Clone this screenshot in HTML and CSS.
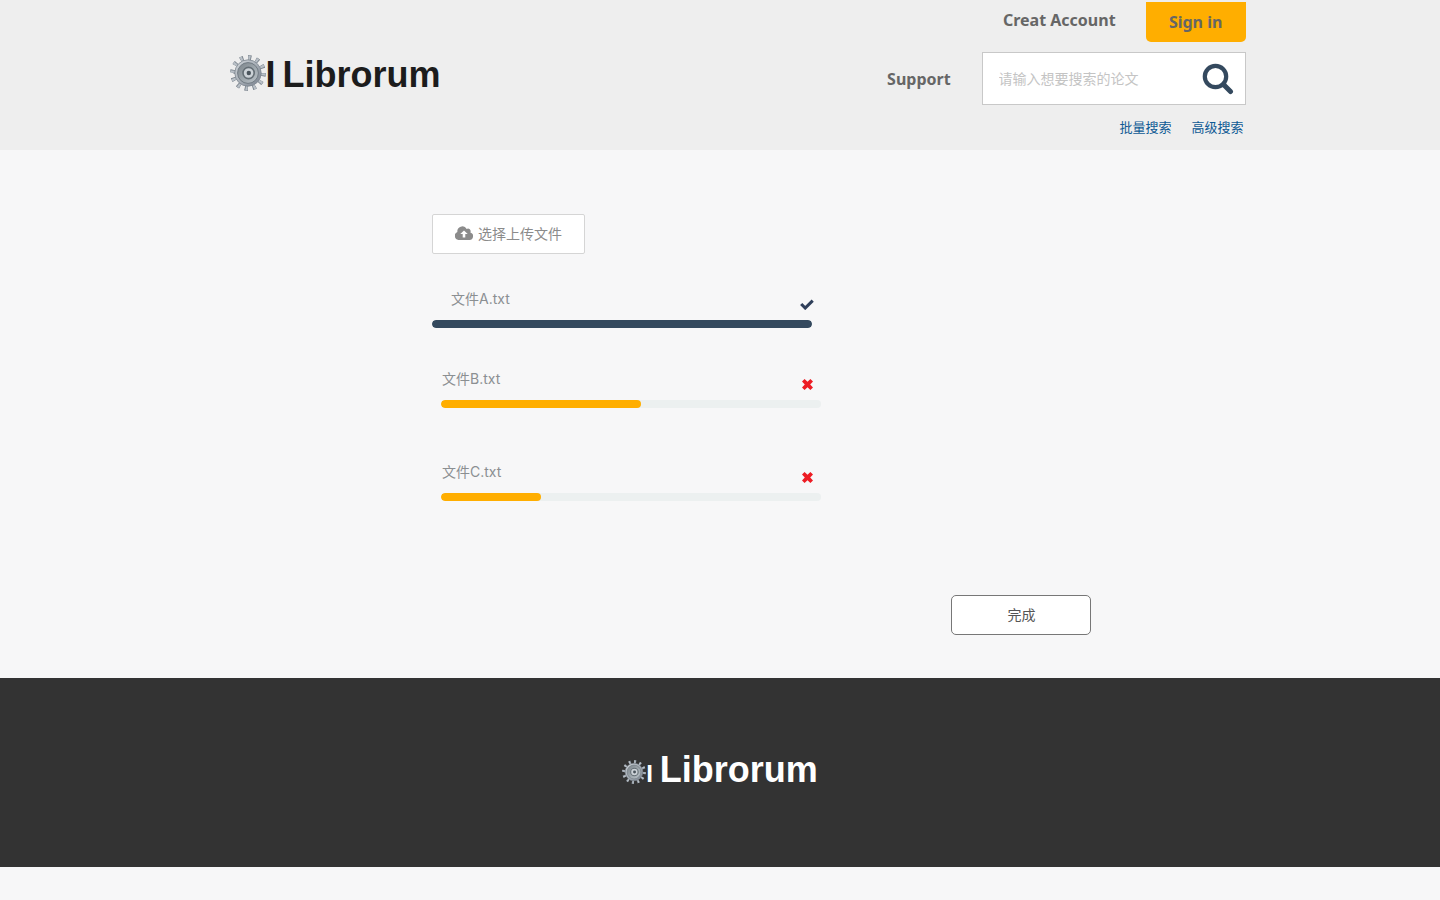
FILE: index.html
```
<!DOCTYPE html>
<html lang="zh-CN">
<head>
<meta charset="utf-8">
<title>Librorum</title>
<meta name="viewport" content="width=device-width, initial-scale=1">
<link rel="stylesheet" href="styles.css">
</head>
<body>
<svg class="sprite" aria-hidden="true">
  <defs>
    <linearGradient id="metal" x1="0" y1="0" x2="1" y2="1">
      <stop offset="0" stop-color="#d5dade"/>
      <stop offset=".5" stop-color="#a7aeb6"/>
      <stop offset="1" stop-color="#777f8c"/>
    </linearGradient>
    <linearGradient id="face" x1="0" y1="0" x2="1" y2="1">
      <stop offset="0" stop-color="#7b848a"/>
      <stop offset="1" stop-color="#bcc4ca"/>
    </linearGradient>
  </defs>
  <symbol id="gear" viewBox="0 0 36 36">
    <circle cx="18" cy="18" r="15.4" fill="none" stroke="#737c86" stroke-width="5" pathLength="120" stroke-dasharray="4.2 5.8"/>
    <circle cx="18" cy="18" r="15.4" fill="none" stroke="#b9c0c7" stroke-width="4.4" pathLength="120" stroke-dasharray="2.8 7.2" stroke-dashoffset="-.4"/>
    <circle cx="18" cy="18" r="13.2" fill="url(#metal)" stroke="#7f8891" stroke-width=".8"/>
    <circle cx="18" cy="18" r="10.4" fill="url(#face)" stroke="#717b83" stroke-width="1"/>
    <circle cx="18.6" cy="18" r="5.6" fill="#ccd2d7" stroke="#646e75" stroke-width="1.6"/>
    <circle cx="18.8" cy="18" r="2.2" fill="#4a545c"/>
  </symbol>
  <symbol id="times" viewBox="0 0 11 11">
    <path d="M2.6 0 5.5 2.8 8.4 0 11 2.6 8.2 5.5 11 8.4 8.4 11 5.5 8.2 2.6 11 0 8.4 2.8 5.5 0 2.6Z"/>
  </symbol>
</svg>

<header class="site-header">
  <a class="logo" href="#"><svg class="gear"><use href="#gear"/></svg><span class="initial">I</span><span>Librorum</span></a>
  <div class="tools">
    <nav class="account">
      <a class="nav-link" href="#">Creat Account</a>
      <button class="sign-in" type="button">Sign in</button>
    </nav>
    <div class="search-row">
      <a class="nav-link" href="#">Support</a>
      <form class="search">
        <input class="search-input" type="text" aria-label="搜索论文" placeholder="请输入想要搜索的论文">
        <button class="search-button" type="button" aria-label="搜索">
          <svg viewBox="0 0 32 32"><circle cx="13.5" cy="13.5" r="10.7" fill="none" stroke="#34495e" stroke-width="4.2"/><path d="m21.5 21.5 7 7" fill="none" stroke="#34495e" stroke-width="5" stroke-linecap="round"/></svg>
        </button>
      </form>
    </div>
    <div class="search-links">
      <a href="#">批量搜索</a>
      <a href="#">高级搜索</a>
    </div>
  </div>
</header>

<main class="uploads">
  <button class="choose" type="button">
    <svg viewBox="0 0 18 14"><path fill="#8b8b8b" fill-rule="evenodd" d="M4.2 14A4.1 4.1 0 0 1 2.4 6.1 5 5 0 0 1 11.7 2.9a2.7 2.7 0 0 1 3.7 3.5A3.9 3.9 0 0 1 14 14ZM9 4.4 5.3 8.1h2.4v3.4h2.6V8.1h2.4Z"/></svg>
    选择上传文件
  </button>
  <ul class="files">
    <li class="file done">
      <div class="file-head">
        <label for="file-a">文件A.txt</label>
        <svg class="check" viewBox="0 0 14 11" role="img" aria-label="完成"><path d="m1.2 5 4 4L12.7 1.7" fill="none" stroke="#2f3f5a" stroke-width="3.1"/></svg>
      </div>
      <progress id="file-a" class="bar" value="100" max="100"></progress>
    </li>
    <li class="file">
      <div class="file-head">
        <label for="file-b">文件B.txt</label>
        <button class="remove" type="button" aria-label="移除"><svg><use href="#times"/></svg></button>
      </div>
      <progress id="file-b" class="bar" value="200" max="380"></progress>
    </li>
    <li class="file">
      <div class="file-head">
        <label for="file-c">文件C.txt</label>
        <button class="remove" type="button" aria-label="移除"><svg><use href="#times"/></svg></button>
      </div>
      <progress id="file-c" class="bar" value="100" max="380"></progress>
    </li>
  </ul>
  <div class="actions"><button class="finish" type="button">完成</button></div>
</main>

<footer class="site-footer">
  <a class="logo small" href="#"><svg class="gear"><use href="#gear"/></svg><span><span class="initial">I </span>Librorum</span></a>
</footer>
</body>
</html>
```
FILE: styles.css
```
* { box-sizing: border-box; }

body {
  margin: 0;
  background: #f7f7f8;
  color: #666;
  font: 14px/20px "Liberation Sans", "Noto Sans CJK SC", sans-serif;
}

a { color: inherit; text-decoration: none; }

button, input { margin: 0; font: inherit; }

button { cursor: pointer; }

svg { display: block; }

.sprite { position: absolute; width: 0; height: 0; }

.site-header {
  display: flex;
  justify-content: space-between;
  padding: 2px 13.5% 13px 16%;
  background: #eee;
}

.logo {
  display: flex;
  align-items: center;
  align-self: flex-start;
  margin-top: 51px;
  color: #1c1c1c;
  font-size: 36px;
  font-weight: 700;
  line-height: 44px;
  white-space: nowrap;
}

.gear { width: 36px; height: 36px; margin-bottom: 4px; }

.site-header .initial { margin: 0 7px 0 -1px; }

.tools { display: flex; flex-direction: column; align-items: flex-end; }

.account { display: flex; align-items: flex-start; gap: 30px; }

.nav-link, .sign-in {
  color: #666;
  font-family: "Noto Sans", sans-serif;
  font-size: 16px;
  font-weight: 700;
  line-height: 36px;
}

.sign-in {
  width: 100px;
  height: 40px;
  padding: 0;
  border: 0;
  border-radius: 0 0 5px 5px;
  background: #ffae00;
}

.search-row { display: flex; align-items: center; gap: 31px; margin-top: 10px; }

.search {
  display: flex;
  align-items: center;
  width: 264px;
  height: 53px;
  padding: 1px 11px 0 16px;
  border: 1px solid #c8c8c8;
  background: #fff;
}

.search-input {
  flex: 1;
  min-width: 0;
  padding: 0;
  border: 0;
  outline: 0;
  background: none;
  color: #666;
}

.search-input::placeholder { color: #c4c4c4; }

.search-button {
  width: 32px;
  height: 32px;
  padding: 0;
  border: 0;
  background: none;
}

.search-links {
  display: flex;
  gap: 20px;
  margin: 13px 2px 0 0;
  color: #0f5a94;
  font-size: 13px;
  line-height: 19px;
}

.uploads { min-height: 528px; padding: 64px 24% 43px 30%; }

.choose {
  display: flex;
  align-items: center;
  justify-content: center;
  gap: 5px;
  width: 153px;
  height: 40px;
  padding: 0;
  border: 1px solid #d5d5d5;
  border-radius: 2px;
  background: #fff;
  color: #8b8b8b;
}

.choose svg { width: 18px; height: 14px; margin-bottom: 2px; }

.files {
  display: grid;
  margin: 35px 0 0;
  padding: 0;
  list-style: none;
}

.file { width: 380px; height: 93px; margin-left: 9px; color: #8b8f92; }

.file.done { height: 80px; margin-left: 0; }

.file-head {
  display: flex;
  align-items: flex-end;
  justify-content: space-between;
  height: 23px;
  padding: 0 8px 0 1px;
}

.file-head label {
  align-self: flex-start;
  font-family: Inter, "Noto Sans CJK SC", sans-serif;
}

.done .file-head { padding: 0 0 0 19px; }

.check { width: 14px; height: 11px; margin-right: -2px; margin-bottom: 2px; }

.remove { padding: 0; border: 0; background: none; }

.remove svg { width: 11px; height: 11px; margin-bottom: 2px; fill: #ed1c24; }

.bar {
  display: block;
  width: 100%;
  height: 8px;
  margin-top: 8px;
  border: 0;
  border-radius: 4px;
  overflow: hidden;
  appearance: none;
  background: #ecf0f0;
}

.bar::-webkit-progress-bar { background: #ecf0f0; }

.bar::-webkit-progress-value { border-radius: 4px; background: #ffae00; }

.done .bar::-webkit-progress-value { background: #34495e; }

.actions { display: flex; justify-content: flex-end; margin-top: 40px; }

.finish {
  width: 140px;
  height: 40px;
  margin-right: 3px;
  padding: 0;
  border: 1px solid #777;
  border-radius: 5px;
  background: #fff;
  color: #555;
}

.site-footer {
  display: flex;
  justify-content: center;
  height: 189px;
  background: #333;
}

.small { margin-top: 70px; color: #fff; }

.small .gear { width: 24px; height: 24px; margin-bottom: 0; }

.small .initial { font-size: 24px; }
```
